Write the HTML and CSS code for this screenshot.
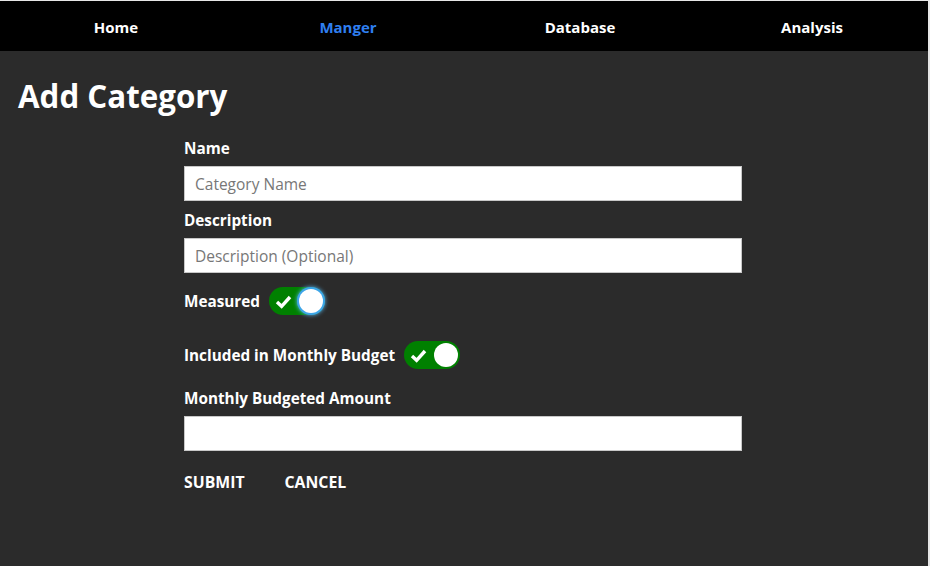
FILE: index.html
```html
<!DOCTYPE html>
<html>
<head>
<meta charset="utf-8">
<link rel="stylesheet" href="styles.css">
</head>
<body>
<div class="app">
  <nav class="nav">
    <a class="nav-item">Home</a>
    <a class="nav-item active">Manger</a>
    <a class="nav-item">Database</a>
    <a class="nav-item">Analysis</a>
  </nav>
  <main class="main">
    <h1 class="title">Add Category</h1>
    <form class="form">
      <label class="label label-first">Name</label>
      <input class="input" type="text" placeholder="Category Name">
      <label class="label">Description</label>
      <input class="input" type="text" placeholder="Description (Optional)">
      <div class="toggle-row row-measured">
        <span class="toggle-label">Measured</span>
        <span class="toggle">
          <svg class="check" width="17" height="15" viewBox="0 0 17 15"><path d="M2 8 L6.6 12.3 L15 3" fill="none" stroke="#fff" stroke-width="3.4"/></svg>
          <span class="knob focused"></span>
        </span>
      </div>
      <div class="toggle-row row-budget">
        <span class="toggle-label">Included in Monthly Budget</span>
        <span class="toggle">
          <svg class="check" width="17" height="15" viewBox="0 0 17 15"><path d="M2 8 L6.6 12.3 L15 3" fill="none" stroke="#fff" stroke-width="3.4"/></svg>
          <span class="knob"></span>
        </span>
      </div>
      <label class="label label-amount">Monthly Budgeted Amount</label>
      <input class="input" type="text">
      <div class="actions">
        <button class="btn" type="button">SUBMIT</button>
        <button class="btn" type="button">CANCEL</button>
      </div>
    </form>
  </main>
</div>
</body>
</html>
```
FILE: styles.css
```css
html, body {
  margin: 0;
  padding: 0;
  background: #e6e6e6;
  font-family: "Open Sans", "Noto Sans", sans-serif;
}
.app {
  margin-top: 1px;
  width: 928px;
  height: 565px;
  background: #2b2b2b;
  color: #fff;
}
.nav {
  display: grid;
  grid-template-columns: repeat(4, 1fr);
  height: 50px;
  background: #000;
  align-items: center;
}
.nav-item {
  text-align: center;
  font-weight: 700;
  font-size: 15px;
  color: #fff;
  padding-top: 2px;
}
.nav-item.active {
  color: #2f7ff0;
}
.main {
  padding: 0 18px;
}
.title {
  margin: 0;
  padding-top: 24px;
  font-size: 31.3px;
  line-height: 42px;
  font-weight: 700;
}
.form {
  display: flex;
  flex-direction: column;
  margin-left: 166px;
  width: 558px;
}
.label {
  display: block;
  font-size: 15.3px;
  font-weight: 700;
  line-height: 20px;
  margin: 9px 0 8px;
}
.label-first {
  margin-top: 21px;
}
.input {
  box-sizing: border-box;
  height: 35px;
  width: 558px;
  border: 1px solid #c8c8c8;
  background: #fff;
  padding: 0 10px;
  font-family: inherit;
  font-size: 15.5px;
  color: #333;
  outline: none;
}
.input::placeholder {
  color: #777;
}
.toggle-row {
  display: flex;
  align-items: center;
  gap: 9px;
  height: 30px;
}
.row-measured {
  margin-top: 13px;
}
.row-budget {
  margin-top: 24px;
}
.toggle-label {
  font-size: 15.3px;
  font-weight: 700;
}
.toggle {
  position: relative;
  display: flex;
  align-items: center;
  box-sizing: border-box;
  width: 56px;
  height: 28px;
  border-radius: 14px;
  background: #008000;
  padding-left: 6px;
}
.knob {
  position: absolute;
  right: 2px;
  top: 2px;
  width: 24px;
  height: 24px;
  border-radius: 50%;
  background: #fff;
}
.knob.focused {
  box-shadow: 0 0 0 2px #3da5e8, 0 0 4px 2px #5ab8f0;
}
.label-amount {
  margin-top: 18px;
}
.actions {
  display: flex;
  gap: 40px;
  margin-top: 21px;
}
.btn {
  background: none;
  border: 0;
  padding: 0;
  color: #fff;
  font-family: inherit;
  font-size: 15.8px;
  font-weight: 700;
  line-height: 20px;
  cursor: pointer;
}
```
